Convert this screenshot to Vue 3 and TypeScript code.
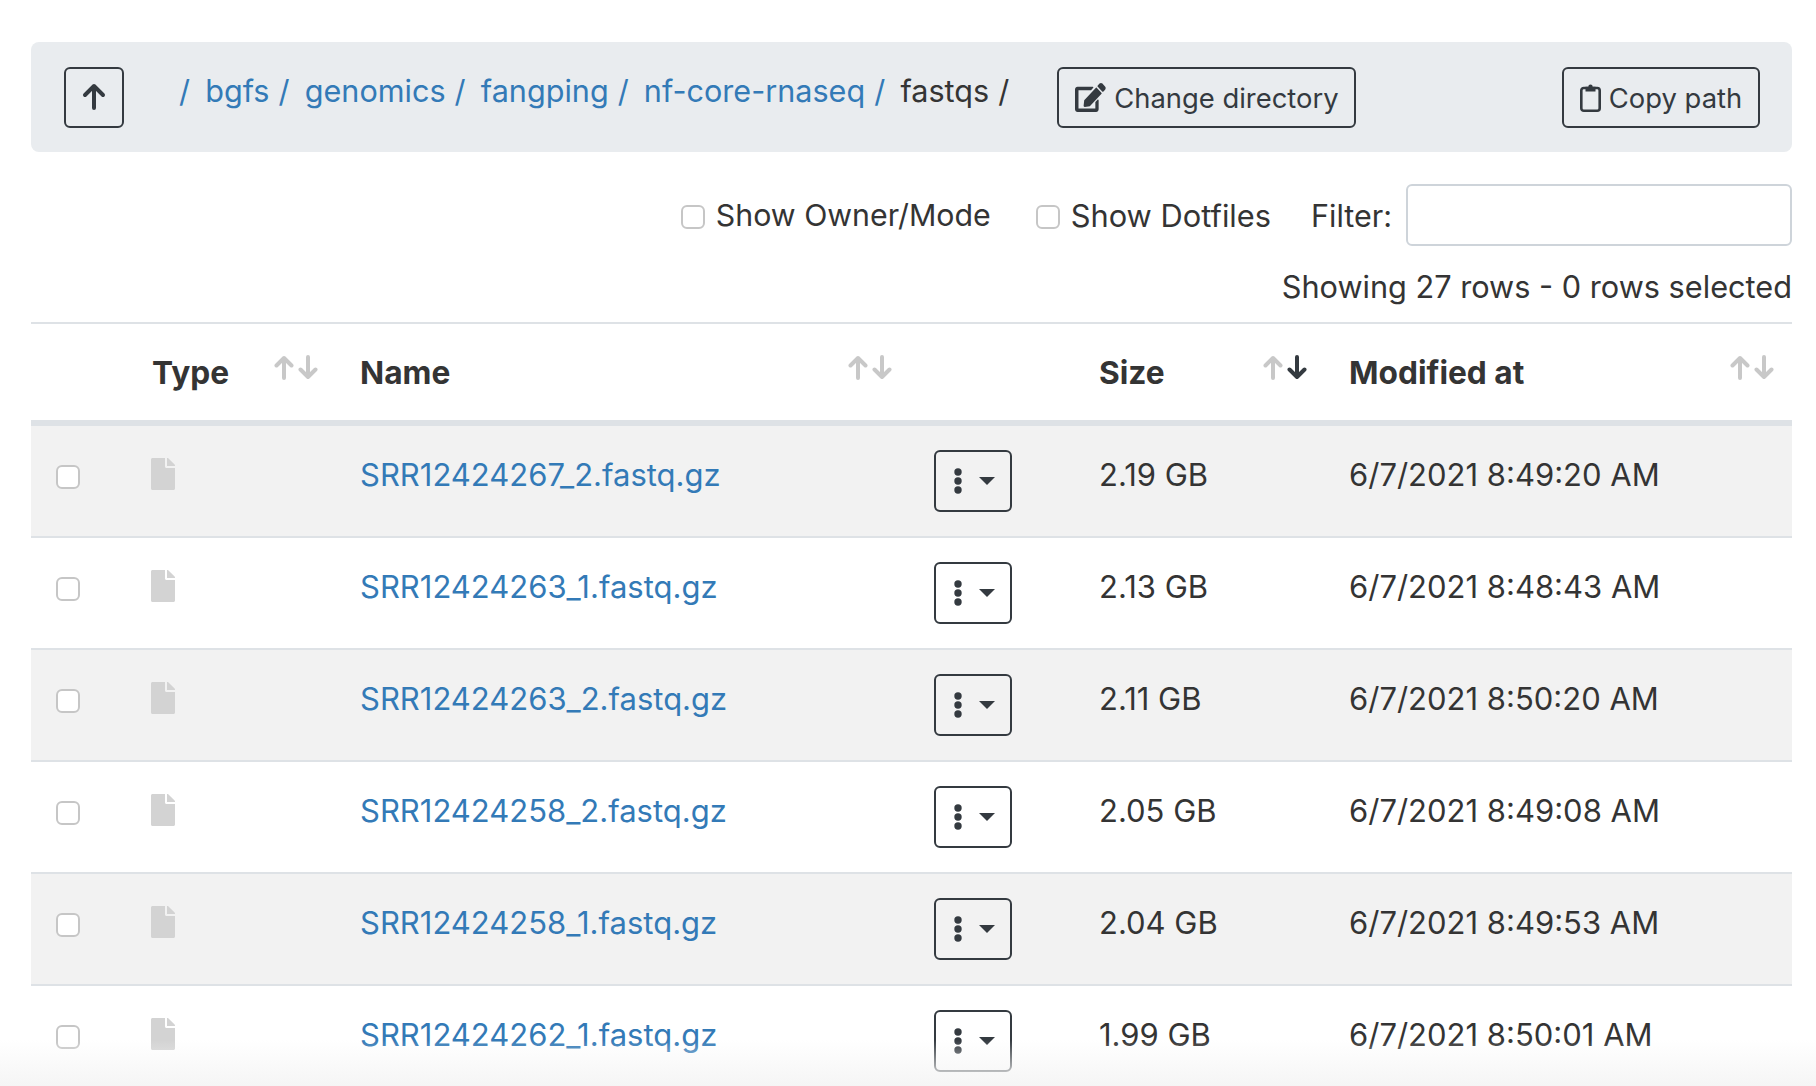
<script setup lang="ts">
interface FileRow {
  name: string
  size: string
  modified: string
}

const crumbs = ["bgfs", "genomics", "fangping", "nf-core-rnaseq"]

const rows: FileRow[] = [
  { name: "SRR12424267_2.fastq.gz", size: "2.19 GB", modified: "6/7/2021 8:49:20 AM" },
  { name: "SRR12424263_1.fastq.gz", size: "2.13 GB", modified: "6/7/2021 8:48:43 AM" },
  { name: "SRR12424263_2.fastq.gz", size: "2.11 GB", modified: "6/7/2021 8:50:20 AM" },
  { name: "SRR12424258_2.fastq.gz", size: "2.05 GB", modified: "6/7/2021 8:49:08 AM" },
  { name: "SRR12424258_1.fastq.gz", size: "2.04 GB", modified: "6/7/2021 8:49:53 AM" },
  { name: "SRR12424262_1.fastq.gz", size: "1.99 GB", modified: "6/7/2021 8:50:01 AM" },
]

const columns = [
  { label: "Type", active: false },
  { label: "Name", active: false },
  { label: "", active: false },
  { label: "Size", active: true },
  { label: "Modified at", active: false },
]
</script>

<template>
  <div class="page">
    <div class="path-bar">
      <button class="btn btn-up" type="button" aria-label="Up">
        <svg width="26" height="28" viewBox="0 0 26 28" fill="none" stroke="currentColor" stroke-width="4" stroke-linecap="round" stroke-linejoin="round">
          <path d="M13 25V3M4 12l9-9 9 9" />
        </svg>
      </button>
      <nav class="crumbs">
        <span class="sep link">/</span>
        <template v-for="c in crumbs" :key="c">
          <a class="link" href="#">{{ c }}</a>
          <span class="sep link">/</span>
        </template>
        <span>fastqs</span>
        <span class="sep">/</span>
      </nav>
      <button class="btn btn-change" type="button">
        <svg width="31" height="29" viewBox="0 0 32 28" preserveAspectRatio="none">
          <path fill="currentColor" d="M22.4 4.6l5 5c.2.2.2.6 0 .8L15.300 22.500l-5.200.6c-.7.1-1.300-.5-1.200-1.200l.6-5.200L21.600 4.600c.2-.2.6-.2.8 0zM31 3.300L28.300.6c-.8-.8-2.200-.8-3 0l-2 2c-.2.2-.2.6 0 .8l5 5c.2.200.6.200.8 0l2-2c.8-.9.8-2.200-.1-3.100zM21 18.900V24.500H3.600V7.100h12.500c.2 0 .4-.1.5-.2l2.200-2.200c.4-.4.100-1.100-.5-1.100H2.600C1.200 3.600 0 4.800 0 6.200v19.200C0 26.800 1.200 28 2.600 28h19.200c1.400 0 2.600-1.200 2.600-2.600V16.700c0-.6-.7-.9-1.100-.5L21.100 18.400c-.1.100-.1.300-.1.500z" />
        </svg>
        <span>Change directory</span>
      </button>
      <button class="btn btn-copy" type="button">
        <svg width="21" height="29" viewBox="0 0 21 29" fill="none" stroke="currentColor">
          <rect x="1.300" y="5" width="18.400" height="22.700" rx="2.500" stroke-width="2.600" />
          <path fill="currentColor" stroke="none" d="M5.500 3.800h2.800a2.200 2.200 0 0 1 4.400 0h2.800v4.700H5.500z" />
        </svg>
        <span>Copy path</span>
      </button>
    </div>

    <div class="options">
      <label class="check"><input type="checkbox" /> Show Owner/Mode</label>
      <label class="check"><input type="checkbox" /> Show Dotfiles</label>
      <label class="filter">Filter: <input type="text" /></label>
    </div>
    <div class="summary">Showing 27 rows - 0 rows selected</div>

    <table class="files">
      <colgroup>
        <col style="width: 97px" />
        <col style="width: 208px" />
        <col style="width: 574px" />
        <col style="width: 165px" />
        <col style="width: 250px" />
        <col style="width: 467px" />
      </colgroup>
      <thead>
        <tr>
          <th></th>
          <th v-for="col in columns" :key="col.label">
            {{ col.label }}
            <span v-if="col.label" class="sort" :class="{ active: col.active }">
              <svg width="20" height="25" viewBox="0 0 20 25" fill="none" stroke="currentColor" stroke-width="4" stroke-linecap="round" stroke-linejoin="round">
                <path d="M10 23V3M2.500 10.500L10 3l7.500 7.500" />
              </svg>
              <svg class="down" width="20" height="25" viewBox="0 0 20 25" fill="none" stroke="currentColor" stroke-width="4" stroke-linecap="round" stroke-linejoin="round">
                <path d="M10 2v20M2.500 14.500L10 22l7.500-7.500" />
              </svg>
            </span>
          </th>
        </tr>
      </thead>
      <tbody>
        <tr v-for="row in rows" :key="row.name">
          <td><input class="row-check" type="checkbox" /></td>
          <td>
            <svg class="file-icon" width="24" height="32" viewBox="0 0 24 32">
              <path fill="#d3d3d3" d="M14 8.500V0H1.500C.7 0 0 .7 0 1.500v29C0 31.300.7 32 1.500 32h21c.8 0 1.500-.7 1.500-1.500V10h-8.500c-.8 0-1.500-.7-1.500-1.500zM24 7.600V8h-8V0h.4c.4 0 .8.200 1.100.4l6.100 6.100c.3.300.4.700.4 1.100z" />
            </svg>
          </td>
          <td class="text"><a class="link" href="#">{{ row.name }}</a></td>
          <td>
            <button class="btn btn-menu" type="button" aria-label="Actions">
              <svg width="10" height="26" viewBox="0 0 10 26" fill="currentColor">
                <circle cx="5" cy="4" r="3.700" />
                <circle cx="5" cy="13" r="3.700" />
                <circle cx="5" cy="22" r="3.700" />
              </svg>
              <span class="caret"></span>
            </button>
          </td>
          <td class="text">{{ row.size }}</td>
          <td class="text">{{ row.modified }}</td>
        </tr>
      </tbody>
    </table>
    <div class="fade"></div>
  </div>
</template>

<style scoped>
.page {
  position: relative;
  height: 1086px;
  overflow: hidden;
  padding: 42px 24px 0 31px;
  box-sizing: border-box;
  font-family: Inter, "Liberation Sans", sans-serif;
  font-size: 31px;
  line-height: 45px;
  color: #343434;
}

.link {
  color: #337ab7;
  text-decoration: none;
}

.path-bar {
  display: flex;
  align-items: center;
  height: 110px;
  padding: 0 32px 0 33px;
  background: #e9ecef;
  border-radius: 8px;
}

.btn {
  display: inline-flex;
  align-items: center;
  justify-content: center;
  box-sizing: border-box;
  height: 61px;
  background: transparent;
  border: 2px solid #343a40;
  border-radius: 6px;
  color: #343a40;
  font: inherit;
  font-size: 27.4px;
  padding: 0;
}

.btn span {
  margin-top: 2px;
}

.btn-up {
  width: 60px;
  flex: none;
}

.crumbs {
  display: flex;
  gap: 9px;
  margin-left: 55px;
  margin-top: -14px;
  font-size: 30.6px;
  white-space: nowrap;
}

.crumbs .sep {
  margin-right: 6.2px;
}

.btn-change {
  width: 299px;
  gap: 8px;
  margin-left: 42px;
}

.btn-copy {
  width: 198px;
  gap: 8px;
  margin-left: auto;
}

.options {
  display: flex;
  justify-content: flex-end;
  align-items: center;
  height: 62px;
  margin-top: 32px;
  font-size: 30.8px;
}

.check {
  display: flex;
  align-items: center;
  gap: 11px;
  margin-right: 40px;
}

.check:first-child {
  margin-right: 45px;
  font-size: 30.3px;
}

.check input,
.row-check {
  appearance: none;
  display: block;
  width: 24px;
  height: 24px;
  margin: 4px 0 0;
  background: #fff;
  border: 2px solid #c6c6c6;
  border-radius: 6px;
}

.filter {
  display: flex;
  align-items: center;
  gap: 14px;
  font-size: 30.5px;
}

.filter input {
  box-sizing: border-box;
  width: 386px;
  height: 62px;
  background: #fff;
  border: 2px solid #ced4da;
  border-radius: 6px;
}

.summary {
  margin-top: 18px;
  font-size: 30.7px;
  text-align: right;
}

.files {
  width: 1761px;
  margin-top: 13px;
  border-collapse: separate;
  border-spacing: 0;
  table-layout: fixed;
}

.files th {
  position: relative;
  height: 104px;
  padding: 0 24px;
  box-sizing: border-box;
  border-top: 2px solid #dee2e6;
  border-bottom: 6px solid #dee2e6;
  text-align: left;
  font-size: 31.7px;
  font-weight: 700;
}

.sort {
  position: absolute;
  top: 31px;
  right: 18px;
  display: flex;
  gap: 4px;
  color: #c8c8c8;
}

.sort.active .down {
  color: #343a40;
}

.files td {
  height: 112px;
  padding: 24px 24px 0;
  box-sizing: border-box;
  vertical-align: top;
  border-bottom: 2px solid #dee2e6;
}

.files td.text {
  padding-top: 26px;
}

.files tbody tr:nth-child(odd) td {
  background: #f2f2f2;
}

.row-check {
  margin: 15px 0 0 1px;
}

.file-icon {
  display: block;
  margin-top: 8px;
  margin-left: -1px;
}

.btn-menu {
  width: 78px;
  height: 62px;
  gap: 16px;
}

.btn-menu svg {
  margin-left: 1px;
}

.caret {
  width: 0;
  height: 0;
  margin-top: 0 !important;
  border-left: 8px solid transparent;
  border-right: 8px solid transparent;
  border-top: 8px solid #343a40;
}

.fade {
  position: absolute;
  left: 0;
  right: 0;
  bottom: 0;
  height: 46px;
  background: linear-gradient(rgba(245, 245, 245, 0), #f5f5f5);
  pointer-events: none;
}
</style>

<style>
body {
  background: #fff;
}
</style>
